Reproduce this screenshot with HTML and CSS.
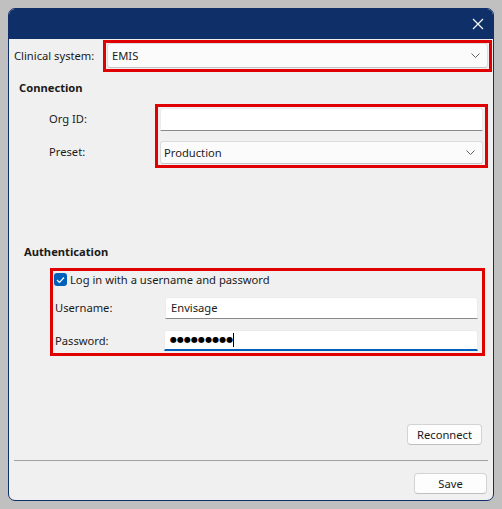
FILE: index.html
```html
<!DOCTYPE html>
<html>
<head>
<meta charset="utf-8">
<link rel="stylesheet" href="styles.css">
</head>
<body>
<div class="window">
  <div class="titlebar">
    <svg class="close" width="12" height="12" viewBox="0 0 12 12"><path d="M1 1 L11 11 M11 1 L1 11" stroke="#ffffff" stroke-width="1.1" fill="none"/></svg>
  </div>
  <div class="content">
    <div class="row-system">
      <span class="lbl-system">Clinical system:</span>
      <div class="hl hl-system">
        <div class="combo combo-system"><span>EMIS</span><svg class="chev" width="9" height="5" viewBox="0 0 9 5"><path d="M0.5 0.5 L4.5 4.5 L8.5 0.5" stroke="#5f5f5f" fill="none" stroke-width="1"/></svg></div>
      </div>
    </div>

    <div class="group-title conn-title">Connection</div>
    <div class="conn">
      <div class="conn-labels">
        <span class="lbl">Org ID:</span>
        <span class="lbl">Preset:</span>
      </div>
      <div class="hl hl-conn">
        <div class="textbox"></div>
        <div class="combo"><span>Production</span><svg class="chev" width="9" height="5" viewBox="0 0 9 5"><path d="M0.5 0.5 L4.5 4.5 L8.5 0.5" stroke="#5f5f5f" fill="none" stroke-width="1"/></svg></div>
      </div>
    </div>

    <div class="group-title auth-title">Authentication</div>
    <div class="hl hl-auth">
      <div class="check-row">
        <span class="checkbox"><svg width="9" height="8" viewBox="0 0 9 8"><path d="M1 4 L3.5 6.5 L8 1.5" stroke="#ffffff" stroke-width="1.2" fill="none"/></svg></span>
        <span>Log in with a username and password</span>
      </div>
      <div class="field-row user-row">
        <span class="lbl-auth">Username:</span>
        <div class="textbox tb-user">Envisage</div>
      </div>
      <div class="field-row pass-row">
        <span class="lbl-auth">Password:</span>
        <div class="textbox tb-pass focused"><span class="dots">●●●●●●●●●</span><span class="caret"></span></div>
      </div>
    </div>

    <div class="spacer"></div>
    <div class="btn-row reconnect-row"><button class="btn btn-reconnect">Reconnect</button></div>
    <div class="separator"></div>
    <div class="btn-row save-row"><button class="btn btn-save">Save</button></div>
  </div>
</div>
</body>
</html>
```

FILE: styles.css
```css
* { box-sizing: border-box; }
html, body { margin: 0; padding: 0; }
body {
  background: #c0c0c0;
  padding: 8px;
  font-family: "Noto Sans", "DejaVu Sans", sans-serif;
  font-size: 11.2px;
  color: #1a1a1a;
}
.window {
  width: 486px;
  height: 493px;
  border: 1px solid #0e2f68;
  border-radius: 7px;
  background: #f0f0f0;
  display: flex;
  flex-direction: column;
  overflow: hidden;
}
.titlebar {
  height: 30px;
  flex: none;
  background: #0e2f68;
  display: flex;
  justify-content: flex-end;
  align-items: center;
  padding-right: 9px;
}
.close { display: block; margin-top: 0px; }
.content {
  flex: 1;
  display: flex;
  flex-direction: column;
}
.hl { border: 3px solid #e00000; }

.row-system {
  display: flex;
  align-items: center;
  margin-top: 1px;
  padding-left: 5px;
}
.lbl-system { width: 89px; flex: none; padding-bottom: 1px; }
.hl-system {
  width: 389px;
  padding: 0 1px 1px 1px;
}
.combo {
  height: 25px;
  background: #fbfbfb;
  border: 1px solid #dcdcdc;
  border-bottom-color: #c4c4c4;
  border-radius: 3px;
  display: flex;
  align-items: center;
  justify-content: space-between;
  padding: 0 7px 1px 3px;
  color: #1b1b1b;
}
.combo-system { padding-left: 4px; }
.chev { display: block; margin-top: 1px; }

.group-title {
  font-weight: bold;
  line-height: 16px;
  height: 16px;
}
.conn-title { margin-top: 8px; padding-left: 10px; margin-bottom: 1px; }
.conn {
  display: flex;
  margin-top: 7px;
  padding-left: 40px;
}
.conn-labels {
  width: 106px;
  flex: none;
  display: flex;
  flex-direction: column;
  gap: 10px;
  padding-top: 3px;
}
.lbl { height: 23px; line-height: 23px; }
.hl-conn {
  width: 333px;
  padding: 1px 2px 1px 2px;
  display: flex;
  flex-direction: column;
  gap: 10px;
}
.hl-conn .textbox, .hl-conn .combo { height: 23px; }
.textbox {
  background: #ffffff;
  border: 1px solid #ececec;
  border-bottom: 1px solid #8a8a8a;
  border-radius: 3px 3px 0 0;
  display: flex;
  align-items: center;
  padding-left: 5px;
  padding-bottom: 1px;
  color: #1b1b1b;
}

.auth-title { margin-top: 76px; padding-left: 15px; margin-bottom: 1px; }
.hl-auth {
  margin-top: 7px;
  margin-left: 41px;
  width: 435px;
  padding: 1px 4px 2px 1px;
}
.check-row {
  height: 15px;
  display: flex;
  align-items: center;
  gap: 3px;
}
.check-row > span:last-child { padding-bottom: 1px; }
.checkbox {
  width: 13px;
  height: 13px;
  background: #005fb8;
  border-radius: 3px;
  display: flex;
  align-items: center;
  justify-content: center;
}
.checkbox svg { display: block; }
.field-row {
  display: flex;
  align-items: center;
}
.lbl-auth { width: 111px; flex: none; padding-left: 1px; padding-bottom: 1px; }
.user-row { margin-top: 10px; }
.tb-user { width: 313px; height: 22px; }
.pass-row { margin-top: 11px; }
.tb-pass {
  width: 315px;
  height: 21px;
  margin-left: -1px;
  border-bottom: 2px solid #005fb8;
  padding-left: 5px;
  padding-bottom: 0;
  color: #000;
}
.dots {
  font-family: "DejaVu Sans", sans-serif;
  font-size: 8px;
  letter-spacing: 0.05px;
  line-height: 1;
}
.caret {
  display: inline-block;
  width: 1px;
  height: 14px;
  background: #000;
  margin-left: 0px;
}

.spacer { flex: 1; }
.btn-row { display: flex; justify-content: flex-end; }
.btn {
  font-family: inherit;
  font-size: 11.2px;
  color: #1a1a1a;
  background: #fdfdfd;
  border: 1px solid #d3d3d3;
  border-bottom-color: #c0c0c0;
  border-radius: 4px;
  padding: 0 0 1px 0;
  display: flex;
  align-items: center;
  justify-content: center;
}
.reconnect-row { padding-right: 11px; }
.btn-reconnect { width: 75px; height: 21px; }
.separator {
  height: 1px;
  background: #a0a0a0;
  margin: 15px 5px 0 5px;
}
.save-row { margin-top: 12px; padding-right: 6px; margin-bottom: 6px; }
.btn-save { width: 73px; height: 21px; }
```
